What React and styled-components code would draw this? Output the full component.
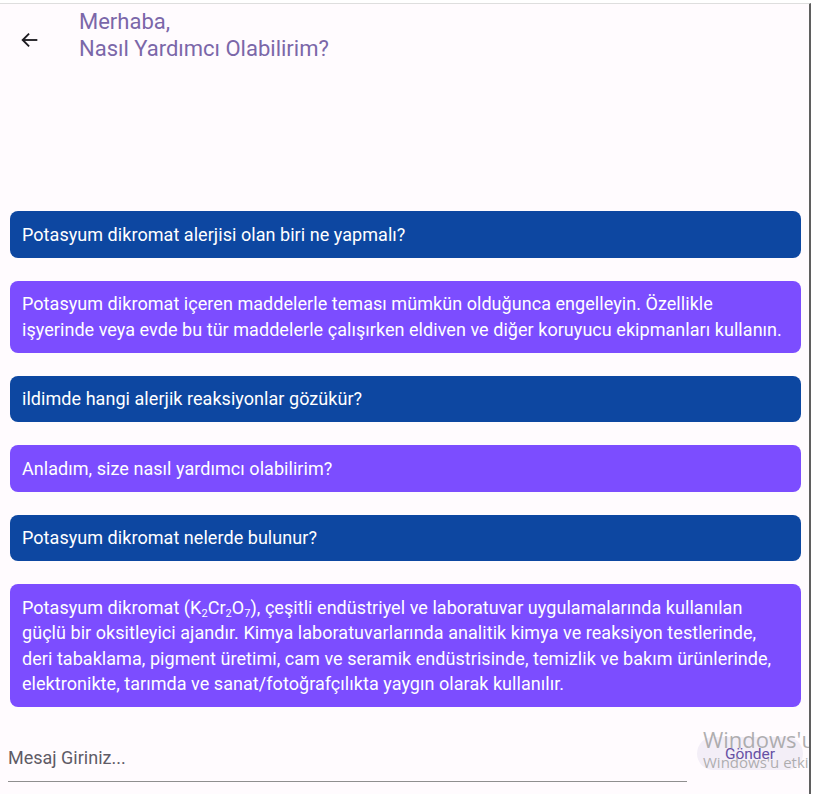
import React from "react";
import styled, { createGlobalStyle } from "styled-components";

const Global = createGlobalStyle`
  html, body { margin: 0; padding: 0; background: #ffffff; }
  body { font-family: Roboto, "Noto Sans", Arial, sans-serif; }
`;

const Screen = styled.div`
  position: relative;
  width: 811px;
  height: 791px;
  margin-top: 3px;
  border-top: 1px solid #dedede;
  border-right: 2px solid #5f5f5f;
  background: #fffbfe;
  display: flex;
  flex-direction: column;
  overflow: hidden;
  box-sizing: border-box;
`;

const Header = styled.header`
  display: flex;
  align-items: flex-start;
  padding: 4px 0 0 19px;
  height: 132px;
  box-sizing: border-box;
`;

const BackButton = styled.button`
  width: 22px;
  height: 22px;
  margin-top: 21px;
  padding: 0;
  border: none;
  background: transparent;
  display: flex;
  align-items: center;
  justify-content: center;
  color: #1d1b20;
`;

const Title = styled.h1`
  margin: 0 0 0 38px;
  font-size: 22px;
  font-weight: 400;
  line-height: 27px;
  color: #7b67a9;
`;

const List = styled.div`
  flex: 1;
  display: flex;
  flex-direction: column;
  gap: 23px;
  padding: 75px 8px 0 10px;
`;

const Bubble = styled.div`
  background: ${(p) => (p.$user ? "#0d47a1" : "#7c4dff")};
  color: #ffffff;
  border-radius: 8px;
  padding: 10.5px 8px 10.5px 12px;
  font-size: 18px;
  line-height: 25.5px;
  letter-spacing: 0.05px;
`;

const Line = styled.span`
  display: block;
  white-space: nowrap;
`;

const InputRow = styled.div`
  display: flex;
  align-items: center;
  gap: 10px;
  padding: 0 8px 12px 8px;
  height: 70px;
  box-sizing: border-box;
`;

const Field = styled.div`
  flex: 1;
  height: 46px;
  display: flex;
  align-items: center;
  border-bottom: 1.5px solid #8f8f8f;
  margin-top: 10px;
  font-size: 18px;
  color: #5f5b66;
`;

const SendButton = styled.button`
  width: 106px;
  height: 33px;
  border: none;
  border-radius: 17px;
  background: #f3eef7;
  color: #6750a4;
  font-family: Roboto, Arial, sans-serif;
  font-size: 15.5px;
  margin-right: -2px;
  padding-top: 3px;
`;

const Watermark = styled.div`
  position: absolute;
  left: 703px;
  top: 721px;
  color: rgba(150, 150, 150, 0.75);
  font-family: "Open Sans", Roboto, sans-serif;
  white-space: nowrap;
  pointer-events: none;
`;

const WatermarkBig = styled.div`
  font-size: 22px;
  line-height: 28px;
`;

const WatermarkSmall = styled.div`
  font-size: 15px;
  line-height: 18px;
`;

const Sub = styled.sub`
  font-size: 11px;
  vertical-align: -3px;
  line-height: 0;
`;

export default function App() {
  return (
    <>
      <Global />
      <Screen>
        <Header>
          <BackButton aria-label="Geri">
            <svg width="22" height="22" viewBox="0 0 24 24" fill="none" stroke="#1d1b20" strokeWidth="2">
              <path d="M20 12H4.5" />
              <path d="M11 5l-7 7 7 7" />
            </svg>
          </BackButton>
          <Title>
            Merhaba,
            <br />
            Nasıl Yardımcı Olabilirim?
          </Title>
        </Header>
        <List>
          <Bubble $user>Potasyum dikromat alerjisi olan biri ne yapmalı?</Bubble>
          <Bubble>
            <Line>Potasyum dikromat içeren maddelerle teması mümkün olduğunca engelleyin. Özellikle</Line>
            <Line>işyerinde veya evde bu tür maddelerle çalışırken eldiven ve diğer koruyucu ekipmanları kullanın.</Line>
          </Bubble>
          <Bubble $user>ildimde hangi alerjik reaksiyonlar gözükür?</Bubble>
          <Bubble>Anladım, size nasıl yardımcı olabilirim?</Bubble>
          <Bubble $user>Potasyum dikromat nelerde bulunur?</Bubble>
          <Bubble>
            <Line>
              Potasyum dikromat (K<Sub>2</Sub>Cr<Sub>2</Sub>O<Sub>7</Sub>), çeşitli endüstriyel ve laboratuvar uygulamalarında kullanılan
            </Line>
            <Line>güçlü bir oksitleyici ajandır. Kimya laboratuvarlarında analitik kimya ve reaksiyon testlerinde,</Line>
            <Line>deri tabaklama, pigment üretimi, cam ve seramik endüstrisinde, temizlik ve bakım ürünlerinde,</Line>
            <Line>elektronikte, tarımda ve sanat/fotoğrafçılıkta yaygın olarak kullanılır.</Line>
          </Bubble>
        </List>
        <InputRow>
          <Field>Mesaj Giriniz...</Field>
          <SendButton>Gönder</SendButton>
        </InputRow>
        <Watermark>
          <WatermarkBig>Windows'u etkinleştir</WatermarkBig>
          <WatermarkSmall>Windows'u etkinleştirmek için Ayarlar'a gidin.</WatermarkSmall>
        </Watermark>
      </Screen>
    </>
  );
}
